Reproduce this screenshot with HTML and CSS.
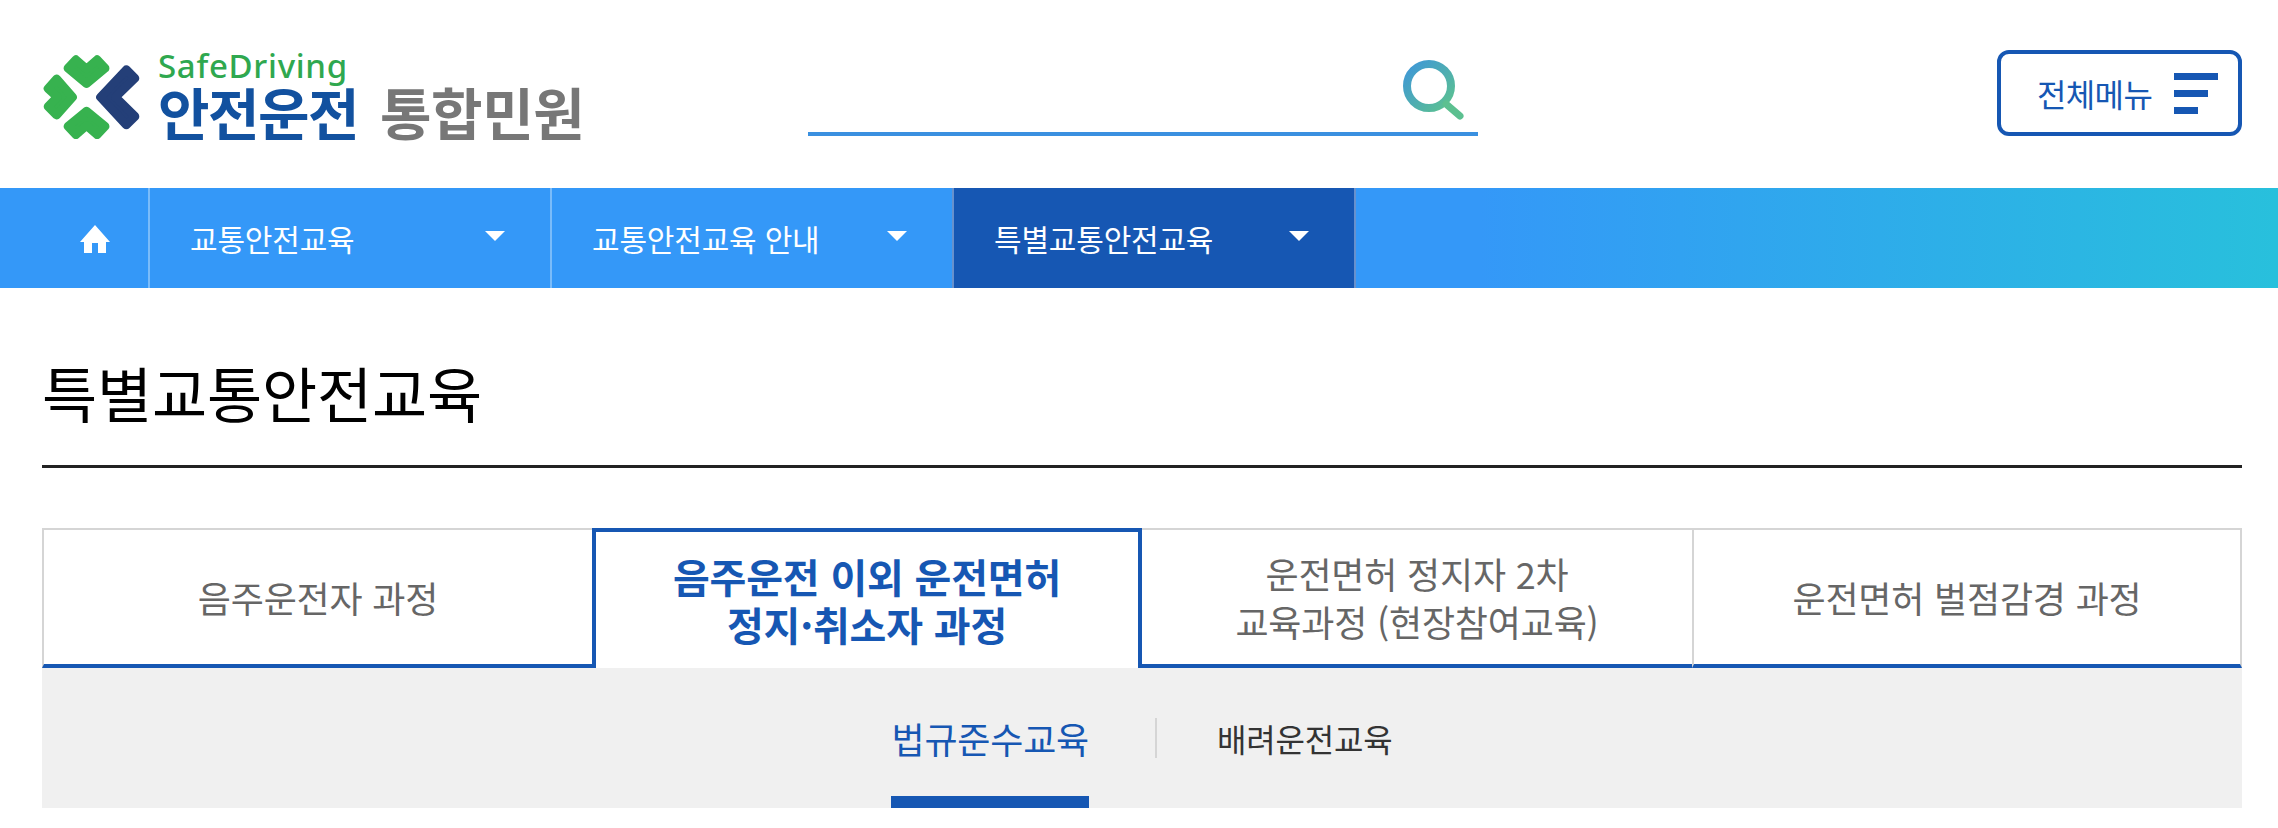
FILE: index.html
```html
<!DOCTYPE html>
<html lang="ko">
<head>
    <meta charset="UTF-8">
    <meta name="viewport" content="width=device-width, initial-scale=1.0">
    <title>안전운전 통합민원</title>
    <link rel="stylesheet" href="styles.css">
</head>
<body>
<header class="header">
    <a class="logo" href="#">
        <svg class="logo-mark" viewBox="70 45 290 253" aria-hidden="true">
            <g fill="#37b24f" stroke="#37b24f" stroke-width="26" stroke-linejoin="round">
                <polygon points="168,59 200,87 232,59 256,85 200,131 144,85"/>
                <polygon points="110,117 158,172 110,226 84,200 112,172 84,146"/>
                <polygon points="200,214 256,260 232,285 200,257 168,285 144,260"/>
            </g>
            <polygon points="242,172 320,89 346,115 287,172 346,230 320,256" fill="#243f78" stroke="#243f78" stroke-width="26" stroke-linejoin="round"/>
        </svg>
        <span class="logo-text">
            <span class="logo-en">SafeDriving</span>
            <span class="logo-ko"><b>안전운전</b><span>통합민원</span></span>
        </span>
    </a>
    <div class="search">
        <svg class="search-icon" viewBox="0 0 62 60" aria-hidden="true">
            <defs>
                <linearGradient id="searchGrad" x1="0" y1="0" x2="1" y2="1">
                    <stop offset="0" stop-color="#3f97d8"/>
                    <stop offset="1" stop-color="#5cc28f"/>
                </linearGradient>
            </defs>
            <circle cx="26" cy="26" r="22" fill="none" stroke="url(#searchGrad)" stroke-width="8"/>
            <line x1="43" y1="44" x2="57" y2="56" stroke="#5cc090" stroke-width="7" stroke-linecap="round"/>
        </svg>
    </div>
    <button class="menu-btn">
        전체메뉴
        <span class="menu-bars"><i></i><i></i><i></i></span>
    </button>
</header>

<nav class="nav">
    <a class="nav-home" href="#">
        <svg viewBox="0 0 30 28" width="30" height="28" aria-hidden="true">
            <path d="M15 0 L30 17 H26 V28 H18 V18 H12 V28 H4 V17 H0 Z" fill="#fff"/>
        </svg>
    </a>
    <a class="nav-item" href="#">교통안전교육<span class="caret"></span></a>
    <a class="nav-item" href="#">교통안전교육 안내<span class="caret"></span></a>
    <a class="nav-item active" href="#">특별교통안전교육<span class="caret"></span></a>
</nav>

<main class="content">
    <h1 class="page-title">특별교통안전교육</h1>
    <div class="tabs">
        <a class="tab" href="#">음주운전자 과정</a>
        <a class="tab active" href="#">음주운전 이외 운전면허<br>정지·취소자 과정</a>
        <a class="tab" href="#">운전면허 정지자 2차<br>교육과정 (현장참여교육)</a>
        <a class="tab" href="#">운전면허 벌점감경 과정</a>
    </div>
    <div class="subtabs">
        <a class="subtab active" href="#">법규준수교육</a>
        <span class="subtab-sep"></span>
        <a class="subtab" href="#">배려운전교육</a>
    </div>
</main>
</body>
</html>
```

FILE: styles.css
```css
* {
    box-sizing: border-box;
}
body {
    margin: 0;
    background-color: #fff;
    font-family: "Noto Sans CJK KR", "Noto Sans", sans-serif;
    letter-spacing: -0.012em;
    overflow: hidden;
}
a {
    text-decoration: none;
    color: inherit;
}

/* header */
.header {
    display: grid;
    grid-template-columns: 765px 670px 1fr;
    align-items: start;
    height: 188px;
    padding: 0 36px 0 43px;
}
.logo {
    display: flex;
    align-items: flex-start;
    margin-top: 55px;
}
.logo-mark {
    width: 97px;
    height: 84px;
    flex: none;
}
.logo-text {
    display: flex;
    flex-direction: column;
    margin-top: -7px;
    margin-left: 18px;
}
.logo-en {
    font-family: "Noto Sans", sans-serif;
    font-size: 33px;
    font-weight: 500;
    line-height: 35px;
    letter-spacing: 0.7px;
    color: #2fa84f;
}
.logo-ko {
    font-size: 56px;
    line-height: 56px;
    letter-spacing: -1.5px;
    white-space: nowrap;
}
.logo-ko b {
    color: #12519f;
}
.logo-ko span {
    margin-left: 22px;
    letter-spacing: -0.5px;
    color: #777;
    font-weight: 700;
}
.search {
    display: flex;
    justify-content: flex-end;
    height: 136px;
    padding: 60px 13px 0 0;
    border-bottom: 4px solid #3a90e0;
}
.search-icon {
    width: 62px;
    height: 60px;
}
.menu-btn {
    justify-self: end;
    display: flex;
    align-items: center;
    gap: 22px;
    width: 245px;
    height: 86px;
    margin-top: 50px;
    padding: 0 0 0 36px;
    background: #fff;
    border: 4px solid #1657b3;
    border-radius: 12px;
    color: #1657b3;
    font-family: inherit;
    font-size: 32px;
    letter-spacing: -0.02em;
    cursor: pointer;
}
.menu-bars {
    display: flex;
    flex-direction: column;
    gap: 10px;
}
.menu-bars i {
    display: block;
    width: 44px;
    height: 7px;
    background-color: #1657b3;
}
.menu-bars i:nth-child(2) {
    width: 34px;
}
.menu-bars i:nth-child(3) {
    width: 24px;
}

/* nav */
.nav {
    display: flex;
    height: 100px;
    background: linear-gradient(90deg, #3498f8 65%, #28c0dc 100%);
    color: #fff;
}
.nav-home {
    display: flex;
    align-items: center;
    width: 148px;
    padding: 2px 0 0 80px;
}
.nav-item {
    display: flex;
    align-items: center;
    justify-content: space-between;
    width: 402px;
    padding: 0 45px 0 40px;
    border-left: 2px solid rgba(255, 255, 255, 0.35);
    font-size: 30px;
}
.nav-item.active {
    background-color: #1657b3;
    border-right: 2px solid rgba(255, 255, 255, 0.35);
    width: 404px;
}
.caret {
    width: 0;
    height: 0;
    border-left: 10px solid transparent;
    border-right: 10px solid transparent;
    border-top: 10px solid #fff;
    margin-top: -4px;
}

/* content */
.content {
    padding: 0 36px 0 42px;
}
.page-title {
    display: flex;
    align-items: center;
    height: 180px;
    margin: 0;
    padding-top: 30px;
    border-bottom: 3px solid #222;
    font-size: 60px;
    font-weight: 400;
    color: #000;
}
.tabs {
    display: flex;
    margin-top: 60px;
}
.tab {
    display: flex;
    align-items: center;
    justify-content: center;
    width: 550px;
    height: 140px;
    border-top: 2px solid #d5d5d5;
    border-left: 2px solid #d5d5d5;
    border-bottom: 4px solid #1657b3;
    font-size: 36px;
    line-height: 48px;
    text-align: center;
    color: #666;
}
.tab:last-child {
    border-right: 2px solid #d5d5d5;
}
.tab.active {
    border: 4px solid #1657b3;
    border-bottom: none;
    font-size: 40px;
    font-weight: 700;
    color: #1657b3;
}
.tab.active + .tab {
    border-left: none;
}
.subtabs {
    display: flex;
    align-items: center;
    justify-content: center;
    height: 140px;
    background-color: #f0f0f0;
}
.subtab {
    display: flex;
    align-items: center;
    height: 100%;
    font-size: 32px;
    color: #333;
}
.subtab.active {
    font-size: 36px;
    color: #1657b3;
    border-bottom: 12px solid #1657b3;
    padding-top: 12px;
}
.subtab-sep {
    width: 2px;
    height: 40px;
    margin: 0 60px 0 66px;
    background-color: #d5d5d5;
}
```
